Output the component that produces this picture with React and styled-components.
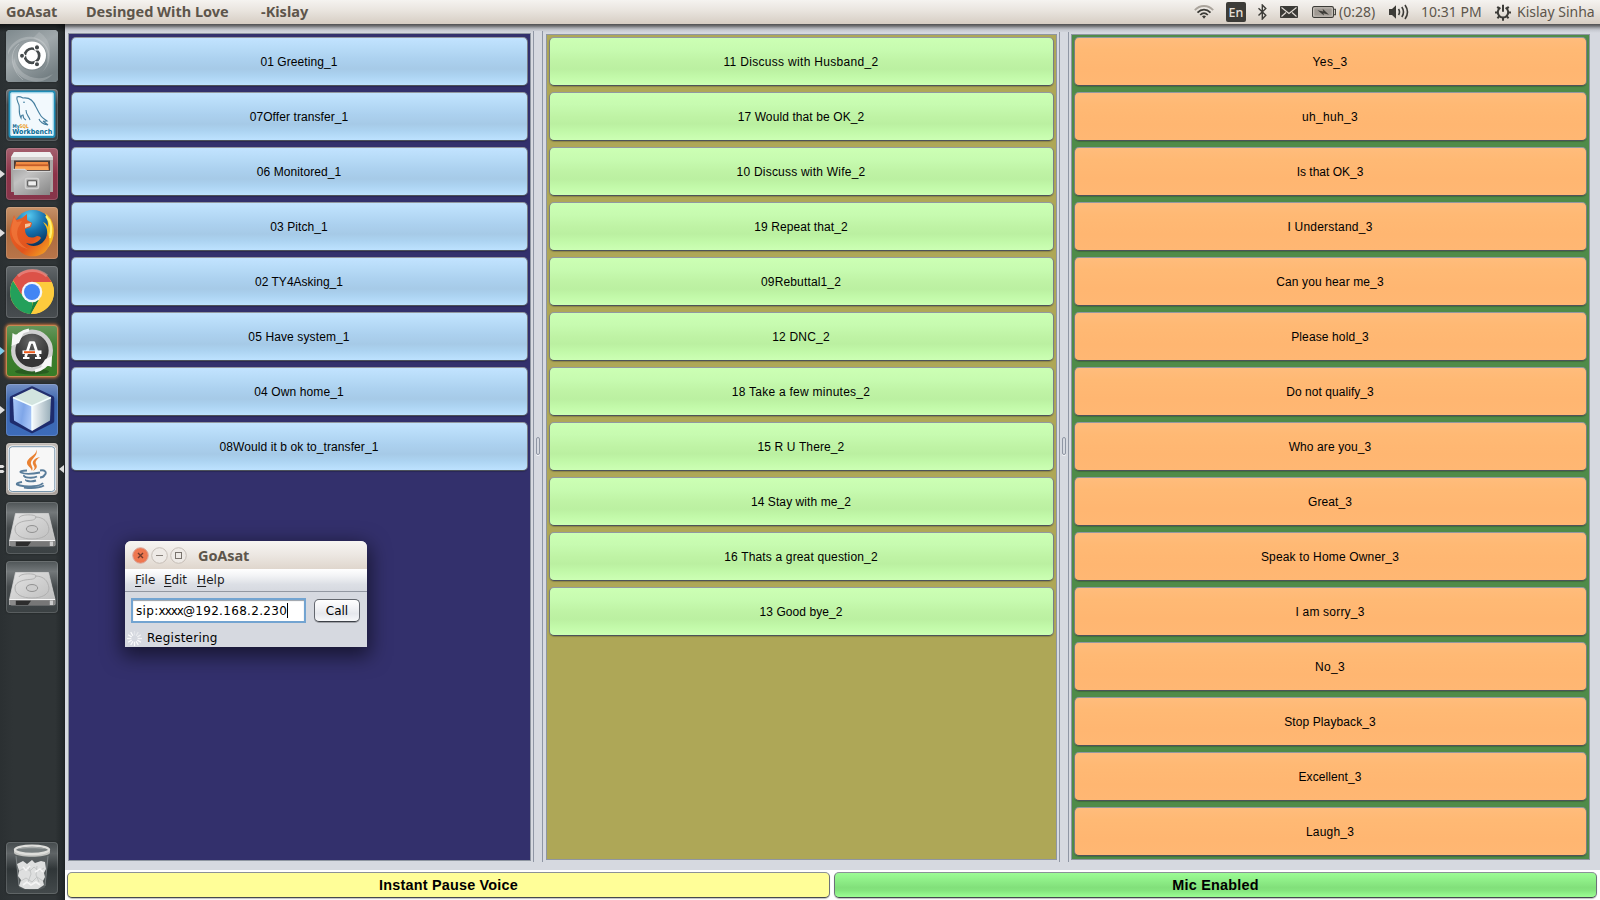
import React from "react";
import styled, { createGlobalStyle, css } from "styled-components";

const GlobalStyle = createGlobalStyle`
  * { box-sizing: border-box; }
  html, body { margin: 0; padding: 0; overflow: hidden; }
  body { background: #fff; font-family: "Liberation Sans", Arial, sans-serif; }
`;

const Desktop = styled.div`
  display: flex;
  flex-direction: column;
  width: 1600px;
  height: 900px;
  position: relative;
  overflow: hidden;
`;

/* ---------- top panel ---------- */

const TopPanel = styled.header`
  display: flex;
  justify-content: space-between;
  align-items: center;
  height: 24px;
  padding: 0 6px;
  background: linear-gradient(#f5f3f0, #e9e4de 45%, #d6cdc3);
  font-family: "Noto Sans", "Open Sans", sans-serif;
  color: #5d554b;
  white-space: nowrap;
`;

const AppTitle = styled.div`
  display: flex;
  height: 24px;
  font-size: 14.5px;
  line-height: 22px;
  font-weight: 700;
`;

const TitlePart = styled.span`
  width: ${(p) => p.$width}px;
  letter-spacing: ${(p) => p.$spacing}px;
`;

const Indicators = styled.div`
  display: flex;
  align-items: center;
  height: 24px;
`;

const Indicator = styled.div`
  display: flex;
  align-items: center;
  width: ${(p) => p.$width}px;
  height: 24px;
  font-size: 14px;
  line-height: 22px;
  padding-bottom: ${(p) => (p.$text ? 1 : 0)}px;
  svg { display: block; flex: none; }
`;

const LangBadge = styled.span`
  width: 20px;
  height: 20px;
  border-radius: 2px;
  background: #3c3b37;
  color: #e6e0d9;
  font-size: 12.5px;
  font-weight: 500;
  line-height: 21px;
  text-align: center;
`;

/* ---------- body ---------- */

const Body = styled.div`
  display: flex;
  height: 876px;
`;

const Launcher = styled.nav`
  display: flex;
  flex-direction: column;
  width: 65px;
  height: 876px;
  padding: 6px 0 6px;
  gap: 7px;
  background:
    linear-gradient(rgba(0, 0, 0, 0.6), transparent 8px),
    linear-gradient(90deg, #2b3032, #2f3436 20%, #2f3436 85%, #23282a 97%, #1d2022);
`;

const LauncherRow = styled.div`
  display: grid;
  grid-template-columns: 6px 52px 7px;
  align-items: center;
  height: 52px;
  margin-top: ${(p) => (p.$last ? "auto" : "0")};
  svg { display: block; }
`;

const Tile = styled.div`
  width: 52px;
  height: 52px;
  border-radius: 4px;
  overflow: hidden;
  background: ${(p) => p.$bg};
  box-shadow: ${(p) =>
    p.$glow
      ? "inset 0 0 0 1px #c98652, 0 0 3px 1px #c9733b"
      : "inset 0 0 0 1px rgba(255,255,255,.15), 0 0 2px rgba(0,0,0,.5)"};
`;

const Workspace = styled.main`
  display: flex;
  flex-direction: column;
  width: 1535px;
`;

const SplitArea = styled.div`
  display: flex;
  align-items: flex-start;
  height: 846px;
  padding-left: 3px;
  background: linear-gradient(#4f4f50, #707174 2px, #a5a7ac 4px, #c6c9d0 6px, #d6d9e0 9px);
`;

const tones = {
  blue: css`
    background: linear-gradient(#c2e3ff, #b8dcf8 20%, #acd1ef 45%, #a6cae7 66%, #acd3f1 80%, #bde2ff);
  `,
  lime: css`
    background: linear-gradient(#ccffb4, #c7fbb0 25%, #bff3a5 50%, #bbf0a1 66%, #c2f9a9 82%, #ccffb4);
  `,
  orange: css`
    background: linear-gradient(#ffbc7c, #ffb974 25%, #ffb671 66%, #ffb773);
  `,
};

const Column = styled.section`
  display: flex;
  flex-direction: column;
  gap: 6px;
  width: ${(p) => p.$width}px;
  height: ${(p) => p.$height}px;
  margin-top: ${(p) => p.$top}px;
  padding: ${(p) => p.$pad}px 2px 0;
  border: 1px solid #8f96a1;
  background: ${(p) => p.$bg};
`;

const ClipButton = styled.button`
  display: block;
  flex: none;
  width: 100%;
  height: 49px;
  margin: 0;
  padding: 1px 1px 0 0;
  border: 1px solid #777d86;
  border-top-color: #9298a0;
  border-bottom-color: #4d5259;
  border-radius: 5px;
  font: 12px/46px "Liberation Sans", Arial, sans-serif;
  letter-spacing: ${(p) => p.$spacing}px;
  color: #000;
  text-align: center;
  box-shadow: 0 1px 1px rgba(0, 0, 0, 0.2);
  ${(p) => tones[p.$tone]}
`;

const Divider = styled.div`
  display: flex;
  justify-content: center;
  width: 10px;
  height: ${(p) => p.$height}px;
  margin: ${(p) => p.$top}px ${(p) => p.$right}px 0 2px;
  padding-top: ${(p) => 413 - p.$top}px;
  border: solid #8f96a4;
  border-width: 0 1px;
  background: #d6d9e0;
`;

const Grip = styled.span`
  width: 4px;
  height: 18px;
  border: 1px solid #8f96a4;
  border-radius: 2px;
  box-shadow: 0 1px 0 #f4f5f8;
`;

const BottomBar = styled.footer`
  display: flex;
  gap: 4px;
  height: 30px;
  padding: 2px 3px 2px 2px;
  background: #fff;
`;

const ActionButton = styled.button`
  width: 763px;
  height: 26px;
  padding: 0;
  border: 1px solid #6d7279;
  border-top-color: #8c9198;
  border-bottom-color: #45494f;
  border-radius: 5px;
  background: ${(p) => p.$bg};
  font: bold 14.4px/24px "Liberation Sans", Arial, sans-serif;
  letter-spacing: 0.22px;
  color: #000;
  box-shadow: 0 1px 1px rgba(0, 0, 0, 0.25);
`;

/* ---------- floating dialog ---------- */

const Dialog = styled.div`
  position: absolute;
  left: 125px;
  top: 541px;
  width: 242px;
  height: 106px;
  border-radius: 6px 6px 0 0;
  background: #d6d9e0;
  box-shadow: 0 6px 20px 3px rgba(0, 0, 0, 0.55);
  font-family: "DejaVu Sans", sans-serif;
  font-size: 12px;
  color: #000;
  white-space: nowrap;
`;

const DialogTitle = styled.div`
  display: flex;
  align-items: center;
  gap: 2px;
  height: 28px;
  padding: 1px 0 0 7px;
  border-radius: 6px 6px 0 0;
  background: linear-gradient(#f7f5f2, #ece7e2 50%, #dfd6cd);
  svg { display: block; }
`;

const DialogName = styled.span`
  margin-left: 9px;
  padding-bottom: 2px;
  font: 700 14.5px/24px "Noto Sans", sans-serif;
  letter-spacing: -0.1px;
  color: #5d554b;
`;

const MenuBar = styled.div`
  display: flex;
  height: 23px;
  padding-left: 10px;
  border-bottom: 1px solid #9297a1;
  background: linear-gradient(#fff, #f3f4f6 30%, #dcdfe5 70%, #d6d9e0);
  line-height: 23px;
  color: #1c1c1e;
`;

const MenuItem = styled.span`
  width: ${(p) => p.$width}px;
  letter-spacing: ${(p) => p.$spacing}px;
`;

const Accel = styled.span`
  text-decoration: underline;
  text-decoration-thickness: 1px;
  text-underline-offset: 2px;
`;

const CallRow = styled.div`
  display: flex;
  align-items: center;
  gap: 8px;
  padding: 6px 0 0 6px;
`;

const AddressField = styled.div`
  display: flex;
  align-items: center;
  width: 175px;
  height: 25px;
  padding-left: 3px;
  border: 2px solid #73a4d1;
  box-shadow: inset 0 1px 1px #9aa0a8;
  background: #fff;
  letter-spacing: 0.32px;
`;

const Squeezed = styled.span`
  letter-spacing: -1px;
`;

const Caret = styled.i`
  width: 1px;
  height: 15px;
  background: #000;
`;

const CallButton = styled.button`
  width: 46px;
  height: 23px;
  padding: 1px 0 0;
  border: 1px solid #63676e;
  border-bottom-color: #3d4148;
  border-radius: 5px;
  background: linear-gradient(#fff, #f1f2f5 40%, #e6e8ed 65%, #f7f8fa);
  font: 12px/20px "DejaVu Sans", sans-serif;
  color: #000;
  box-shadow: 0 1px 0 rgba(0, 0, 0, 0.25);
`;

const StatusRow = styled.div`
  display: flex;
  align-items: center;
  gap: 5px;
  height: 18px;
  margin-top: 6px;
  padding-left: 2px;
  letter-spacing: 0.25px;
`;

/* ---------- drawings: panel indicators ---------- */

const ink = "#3c3b37";

const WifiIcon = () => (
  <svg width="20" height="14" viewBox="0 0 20 14" fill="none" strokeWidth="1.8">
    <path d="M.8 5.2C6-.4 14-.4 19.2 5.2" stroke="#aaa49c" />
    <path d="M3.5 7.6c3.8-4 9.2-4 13 0" stroke={ink} />
    <path d="M6.2 10c2.3-2.4 5.3-2.4 7.6 0" stroke={ink} />
    <path d="M8 11.3q2-1.5 4 0l-2 2.4z" fill={ink} />
  </svg>
);
const BluetoothIcon = () => (
  <svg width="9" height="16" viewBox="0 0 9 16" fill="none" stroke={ink} strokeWidth="1.4">
    <path d="M.5 4.3l7.3 7L4.3 15V1l3.5 3.6-7.3 7" />
  </svg>
);
const MailIcon = () => (
  <svg width="18" height="12" viewBox="0 0 18 12">
    <rect width="18" height="12" rx=".8" fill={ink} />
    <path d="M1.5 1.5L9 7.5l7.5-6M1.5 10.5l4.5-4M16.5 10.5l-4.5-4" fill="none" stroke="#e4ded7" strokeWidth="1.1" />
  </svg>
);
const BatteryIcon = () => (
  <svg width="24" height="12" viewBox="0 0 24 12">
    <rect x=".6" y=".6" width="20.8" height="10.8" rx="1.5" fill="#dcd6ce" stroke={ink} strokeWidth="1.1" />
    <path d="M22 3.2h1.4v5.6H22" fill="none" stroke={ink} strokeWidth="1.1" />
    <rect x="2.2" y="2.2" width="17.6" height="7.6" fill="#a09a93" />
    <path d="M5.5 4.2L11.3 5.6 10.6 2.8 17 8.8 11.4 7.2 12 9.6z" fill={ink} />
  </svg>
);
const SoundIcon = () => (
  <svg width="20" height="16" viewBox="0 0 20 16">
    <path d="M0 5h3l4-3.7v13.4L3 11H0z" fill={ink} />
    <path d="M9.5 5q2 3 0 6M12.8 3q3.4 5 0 10M16 1q5 7 0 14" fill="none" stroke={ink} strokeWidth="1.6" />
  </svg>
);
const SessionIcon = () => (
  <svg width="16" height="17" viewBox="0 0 16 17" fill="none" stroke={ink} strokeWidth="2">
    <path d="M5.4 3.7a5.2 5.2 0 1 0 5.2 0" />
    <path d="M8 .8v7" />
    <path d="M0 8.4h2.5M13.5 8.4H16M8 14v2.7M2.3 2.8l1.9 1.9M13.7 2.8l-1.9 1.9M2.4 14.2l1.9-1.9M13.6 14.2l-1.9-1.9" />
  </svg>
);

/* ---------- drawings: launcher ---------- */

const Pic = ({ children }) => (
  <svg width="52" height="52" viewBox="0 0 52 52">{children}</svg>
);

const UbuntuPic = () => (
  <Pic>
    <defs>
      <linearGradient id="dash" x1="0" y1="0" x2=".6" y2="1">
        <stop offset="0" stopColor="#7e898d" /><stop offset=".5" stopColor="#a0a8ab" /><stop offset="1" stopColor="#758084" />
      </linearGradient>
    </defs>
    <rect width="52" height="52" fill="url(#dash)" />
    <path d="M2 21C9 5 29 2 39 14c8 10 5 22-3 28C48 30 42 8 24 9 12 10 5 17 2 25z" fill="#fff" opacity=".2" />
    <path d="M8 27c3 18 23 27 39 17C34 59 10 50 7 34z" fill="#fff" opacity=".2" />
    <path d="M33 2c9 5 15 18 8 31 1-13-4-21-14-25z" fill="#fff" opacity=".14" />
    <path d="M13 14C3 22 4 39 17 50" fill="none" stroke="#fff" opacity=".25" />
    <circle cx="26" cy="26" r="14.8" fill="#6d777b" opacity=".35" />
    <circle cx="26" cy="25.6" r="14" fill="#fff" />
    <circle cx="26" cy="25.7" r="7.2" fill="none" stroke="#454a4c" strokeWidth="2.7" />
    <g stroke="#fff" strokeWidth="1.1">
      <path d="M18 25.7h3M29 20.5l1.5-2.6M29 31l1.5 2.6" />
      <circle cx="16" cy="25.7" r="2.5" fill="#454a4c" />
      <circle cx="31" cy="17.4" r="2.6" fill="#454a4c" />
      <circle cx="31" cy="34.3" r="2.6" fill="#454a4c" />
    </g>
  </Pic>
);

const PicText = styled.text`
  font-family: "DejaVu Sans", sans-serif;
  font-weight: 700;
`;

const WorkbenchPic = () => (
  <Pic>
    <rect x="3.5" y="2.5" width="45" height="45.5" rx="2" fill="#f2f9fd" stroke="#1f8cb5" strokeWidth="2" />
    <rect x="5" y="4" width="42" height="42.5" rx="1" fill="none" stroke="#b5e2f3" strokeWidth="1" />
    <path d="M20 31c-2-1-3-3-3-5-2 0-2 3-2 3-3-5-1-10-2-13-1-3-3-5-2-8 2-1 4 0 6 1 7-1 11 4 13 9 2 4 3 6 5 9 2 3 4 3 6 5-2 0-3 1-4 0l5 4c-5-1-8-3-9-6M20 21c0 5 3 6 4 10" fill="none" stroke="#457f9f" strokeWidth="1.1" />
    <circle cx="18" cy="13.3" r=".8" fill="#33769b" />
    <PicText x="6.5" y="38.5" fontSize="5" fill="#0b648f" textLength="7" lengthAdjust="spacingAndGlyphs">My</PicText>
    <PicText x="13.5" y="38.5" fontSize="5" fill="#ed9b18" textLength="9" lengthAdjust="spacingAndGlyphs">SQL</PicText>
    <PicText x="6.3" y="45" fontSize="7" fill="#056a94" textLength="40" lengthAdjust="spacingAndGlyphs">Workbench</PicText>
  </Pic>
);

const FilesPic = () => (
  <Pic>
    <defs>
      <linearGradient id="cab" x1="0" y1="0" x2="1" y2="1">
        <stop offset="0" stopColor="#a4a4a4" /><stop offset=".3" stopColor="#c2c2c2" /><stop offset="1" stopColor="#858585" />
      </linearGradient>
    </defs>
    <path d="M8 4h36l3 5v35H5V9z" fill="#a9a6a4" />
    <path d="M8 4h36l3 5H5z" fill="#efefef" />
    <path d="M5 9h42v3H5z" fill="#cfcdcc" />
    <rect x="8" y="12.5" width="36" height="12" fill="#4b3c36" />
    <path d="M10 14h32l1 8H9z" fill="#ef8c44" />
    <path d="M9.500 16.500h33v1.200h-33z" fill="#b94e1f" />
    <path d="M9 18.500h33V22H9z" fill="#fba65a" />
    <path d="M7 21h12l2 2h24l-1 24H8z" fill="url(#cab)" />
    <path d="M7 21.3h12l2 2h24" fill="none" stroke="#e9e9e9" strokeWidth=".8" />
    <rect x="19.5" y="30.500" width="13" height="10" rx="1.5" fill="#aaa" stroke="#d2d2d2" strokeWidth="1.6" />
    <rect x="21.7" y="32.700" width="8.8" height="5.300" rx=".8" fill="#eee" stroke="#555" strokeWidth="1.1" />
  </Pic>
);

const FirefoxPic = () => (
  <Pic>
    <defs>
      <radialGradient id="globe" cx=".4" cy=".15" r=".8"><stop offset="0" stopColor="#55c8ef" /><stop offset=".5" stopColor="#1670ad" /><stop offset="1" stopColor="#073158" /></radialGradient>
      <linearGradient id="fox" x1="0" y1="0" x2="1" y2="1"><stop offset="0" stopColor="#e8622c" /><stop offset=".6" stopColor="#e2541c" /><stop offset="1" stopColor="#f6ae23" /></linearGradient>
    </defs>
    <circle cx="27" cy="22.5" r="19.5" fill="url(#globe)" />
    <path d="M39 6c7 5 10 13 8.5 23-2 11-10 18-20 18.5C34 43 40 38 41 29c1-7-1-10-4-14 3 1 4 3 5 5 0-6-1-10-3-14z" fill="#f7bd20" />
    <path d="M40 9c5 6 6 13 4 20M43 12q4 9 1 19" fill="none" stroke="#fff071" strokeWidth="2" />
    <path d="M8 8l2 5 6-2 5-4v6l5 3-1 4-6 2c0 6 3 10 10 8 2-2 5-1 6 1-3 5-10 7-15 5 4 4 11 4 16 0 3-3 5-6 5-10 4 7 3 14-2 19-6 5-16 6-23 1C5 38 2 29 5 18z" fill="url(#fox)" />
    <path d="M8 10l3 5 5-1-4 7c-3 9 2 17 10 21C10 40 3 28 6 18z" fill="#f58444" opacity=".55" />
    <path d="M19 17l6-1-1 3-5 2z" fill="#f6c39b" />
  </Pic>
);

const ChromePic = () => (
  <Pic>
    <circle cx="26" cy="26" r="22" fill="#fdcb3d" />
    <path d="M7 15l10.4 16 8.6 5 .5 0-1.5 12A22 22 0 0 1 7 15z" fill="#23a05b" />
    <path d="M27 36.2l7.6-5.2L25 48l-1 0z" fill="#178043" />
    <path d="M25 48l9.6-17L35.8 26 34 16l11.6 0a22 22 0 0 1-20.600 32z" fill="#fdcb3d" />
    <path d="M7 14A22 22 0 0 1 45.6 16H26L15 28z" fill="#dc5248" />
    <path d="M12 10A22 22 0 0 1 41 10" fill="none" stroke="#f09b96" strokeWidth="3" opacity=".55" />
    <circle cx="26" cy="26" r="10.3" fill="#f4f6f8" /><circle cx="26" cy="26" r="8" fill="#4285f4" />
  </Pic>
);

const UpdaterPic = () => (
  <Pic>
    <defs><radialGradient id="core" cx=".5" cy=".25"><stop offset="0" stopColor="#666" /><stop offset="1" stopColor="#353535" /></radialGradient></defs>
    <ellipse cx="26" cy="46.5" rx="17" ry="3" fill="#285d20" />
    <circle cx="26" cy="25.5" r="18.8" fill="url(#core)" stroke="#cfcfcf" strokeWidth="4.3" />
    <path d="M8 17c3-7 8-11 15-12M44 34c-3 7-8 11-15 12" fill="none" stroke="#f7f7f7" strokeWidth="3" />
    <path d="M6.5 8l2.5 1.5 8-.5-4 9-7.5 3zM46 31l-.5 11-2.5-1-8 .5 4-7z" fill="#f7f7f7" />
    <g fill="none" stroke="#fff"><path d="M19.5 32l4.7-14.5h3.6L32.5 32" strokeWidth="2.7" strokeLinejoin="round" /><path d="M17 33h6.5M29 33h6" strokeWidth="2" /></g>
    <rect x="16.5" y="25.4" width="19" height="3.6" fill="#fff" /><rect x="18" y="26.2" width="11" height="2" fill="#ed5a1c" />
  </Pic>
);

const CubePic = () => (
  <Pic>
    <defs>
      <linearGradient id="cl" x1="0" y1="0" x2="1" y2=".3"><stop offset="0" stopColor="#a8c8fa" /><stop offset=".6" stopColor="#7fa6e8" /><stop offset="1" stopColor="#a5c3f6" /></linearGradient>
      <linearGradient id="cr" x1="0" y1="0" x2="1" y2="0"><stop offset="0" stopColor="#f7fafb" /><stop offset="1" stopColor="#98aeb9" /></linearGradient>
    </defs>
    <path d="M26 4.5L46 14v23L26 47 6 37V14z" fill="#1b2464" stroke="#1b2464" strokeWidth="4.5" strokeLinejoin="round" opacity=".88" />
    <path d="M26 4.5L45 13.5 26 22 7 13.5z" fill="#d2e4df" />
    <path d="M7 13.5L26 22v25L8 36.5z" fill="url(#cl)" />
    <path d="M45 13.5L26 22v25l18-10.5z" fill="url(#cr)" />
    <path d="M7 13.5L26 22l19-8.5M26 22v24" fill="none" stroke="#f5ffff" strokeWidth="1.5" />
  </Pic>
);

const JavaPic = () => (
  <Pic>
    <rect x="2.5" y="3" width="47" height="46" rx="4" fill="#f7f7f7" stroke="#fff" strokeWidth="1.2" />
    <rect x="3.2" y="3.7" width="45.6" height="44.8" rx="3" fill="none" stroke="#557b98" strokeWidth=".8" />
    <path d="M30 6c2 6-9 8-9 14 0 3 4 4 5 8 2-4-2-6-1-9 1-4 8-7 5-13zM34 14c-5 1-8 4-7 7s3 3 0 7c5-3 4-5 3-7s0-4 4-7z" fill="#e98132" />
    <g fill="none" stroke="#597d9b" strokeWidth="1.9">
      <path d="M21 27.5c-5 0-8 1-6 2 4 2 14 1 19 0M34 27.5c5-1 7 2 5 4-1 2-3 3-5 3M18 32c-1 3 9 3.5 13 1.5M20 36.5c-1 2 6 2.5 10 1" />
      <path d="M16 39c-6 1-7 2.5-2 3.5 8 2 20 1 23-2.5M18 44.5c8 1 16 0 20-2" />
    </g>
  </Pic>
);

const DrivePic = () => (
  <Pic>
    <defs><linearGradient id="hd" x1="0" y1="0" x2="1" y2="1"><stop offset="0" stopColor="#e4e4e4" /><stop offset="1" stopColor="#bababa" /></linearGradient></defs>
    <path d="M9.5 11.5h33l6.5 27v5H3.500v-5z" fill="url(#hd)" stroke="#d8d8d8" strokeWidth=".7" />
    <path d="M3.5 38.8H49V43q0 1.5-2 1.5H5.5Q3.5 44 3.5 42z" fill="#8a8a8a" />
    <path d="M9 39.8h34V44H9z" fill="#777" /><path d="M10 39.8h15l-3 4.2H10z" fill="#2d2d2d" /><path d="M44 39.5h3V44h-3z" fill="#ccc" />
    <path d="M3.5 38.5H49" stroke="#f6f6f6" strokeWidth="1.2" />
    <path d="M29 15c9 0 13 5 14 12 0 7-8 10-17 10S9 34 9 27c0-5 5-7 10-8 6-1 10 0 11-4 0-3-16-3-17 1" fill="none" stroke="#acacac" strokeWidth=".9" />
    <ellipse cx="26" cy="27" rx="5.7" ry="3.5" fill="#ccc" stroke="#929292" />
  </Pic>
);

const TrashPic = () => (
  <Pic>
    <path d="M9 11l4 34c2 4 24 4 26 0l4-34z" fill="#5c6264" opacity=".7" />
    <path d="M10 14l3 30M42 14l-3 30" stroke="#8d9294" strokeWidth=".7" />
    <path d="M11 22l6-3 4 3 5-4 3 3 6-2 4 1 1 7-2 4 1 4-2 4 1 4-6 4H19l-6-3 2-6-3-4 1-5z" fill="#dedfdf" />
    <path d="M13 29l6-3 5 3 4-4 5 4 5-3M15 39l5-3 6 4 5-5 6 4M23 24l2 8-3 8M31 24l-1 9 3 7" fill="none" stroke="#c3c5c5" strokeWidth="1" />
    <path d="M17 25l3 3 4-4M29 30l5-3 3 3M17 43l4-3 4 3 5-3 4 3" fill="none" stroke="#f4f4f4" strokeWidth="1.6" />
    <path d="M8 8v3c3 5 33 5 36 0V8z" fill="#c2c3c0" />
    <ellipse cx="26" cy="7.8" rx="17" ry="4.2" fill="#777e7f" stroke="#dededb" strokeWidth="2.4" />
    <path d="M12 7c6-3 22-3 28 0-7-1-21-1-28 0z" fill="#a5a9a8" />
  </Pic>
);

const TileArrow = ({ color }) => (
  <svg width="5" height="8" viewBox="0 0 5 8"><path d="M0 0l5 4-5 4z" fill={color} /></svg>
);
const DoubleMark = () => (
  <svg width="5" height="8" viewBox="0 0 5 8"><path d="M0 0h3l1.500 1.500L3 3H0zM0 5h3l1.500 1.500L3 8H0z" fill="#dfdfdf" /></svg>
);
const FocusArrow = () => (
  <svg width="7" height="8" viewBox="0 0 7 8"><path d="M6 0v8L1 4z" fill="#dcdcdc" /></svg>
);

const dark = "linear-gradient(#454b4d, #5f6466 22%, #303638 52%, #444a4c)";
const driveBg = "linear-gradient(#4e5456, #73787a 20%, #464b4d 50%, #3b4143)";

const launcherItems = [
  { Art: UbuntuPic, bg: "#8c979b" },
  { Art: WorkbenchPic, bg: "linear-gradient(#73797c, #3d4346 30%, #3d4346)" },
  { Art: FilesPic, bg: "linear-gradient(#a4606e, #8d3348 50%, #86354a)", mark: "light" },
  { Art: FirefoxPic, bg: "linear-gradient(#c79269, #aa6a3e 45%, #b97549)", mark: "light" },
  { Art: ChromePic, bg: "linear-gradient(#62676a, #3c4245 55%, #484d50)" },
  { Art: UpdaterPic, bg: "linear-gradient(#67975d, #3c7d30 45%, #377c26)", mark: "blue", glow: true },
  { Art: CubePic, bg: "linear-gradient(#7590c4, #3b66af 35%, #3e6cba)", mark: "light" },
  { Art: JavaPic, bg: "linear-gradient(#c1bbb6, #a8a09a)", mark: "double", focus: true },
  { Art: DrivePic, bg: driveBg },
  { Art: DrivePic, bg: driveBg },
  { Art: TrashPic, bg: dark, last: true },
];

/* ---------- dialog drawings ---------- */

const RoundControl = ({ kind }) => (
  <svg width="17" height="17" viewBox="0 0 17 17">
    <circle cx="8.5" cy="8.5" r="7.8" fill={kind === "close" ? "#ee7750" : "#eeeae6"} stroke={kind === "close" ? "#d9aaa0" : "#c6beb7"} />
    {kind === "close" && <path d="M6 6l5 5M11 6l-5 5" stroke="#713a2c" strokeWidth="1.4" />}
    {kind === "min" && <path d="M5 8.5h7" stroke="#86807a" />}
    {kind === "max" && <rect x="5.5" y="5.5" width="6" height="6" fill="none" stroke="#79736d" />}
  </svg>
);

const Spinner = () => (
  <svg width="15" height="15" viewBox="0 0 15 15" stroke="#fff" strokeWidth="1.3">
    {Array.from({ length: 12 }, (_, i) => (
      <path key={i} d="M7.5 0v4.3" opacity={i < 4 ? 0.3 + i * 0.15 : 0.9} transform={`rotate(${i * 30} 7.5 7.5)`} />
    ))}
  </svg>
);

/* ---------- content ---------- */

const opening = [
  ["01 Greeting_1"],
  ["07Offer transfer_1"],
  ["06 Monitored_1"],
  ["03 Pitch_1"],
  ["02 TY4Asking_1", 0],
  ["05 Have system_1", 0.12],
  ["04 Own home_1", 0.12],
  ["08Would it b ok to_transfer_1", 0.08],
];
const rebuttals = [
  ["11 Discuss with Husband_2", 0.31],
  ["17 Would that be OK_2", 0.1],
  ["10 Discuss with Wife_2", 0.22],
  ["19 Repeat that_2", 0.1],
  ["09Rebuttal1_2", 0.15],
  ["12 DNC_2", 0.18],
  ["18 Take a few minutes_2", 0.26],
  ["15 R U There_2", 0.12],
  ["14 Stay with me_2"],
  ["16 Thats a great question_2", 0.16],
  ["13 Good bye_2", 0.06],
];
const replies = [
  ["Yes_3", 0.4],
  ["uh_huh_3", 0.3],
  ["Is that OK_3", 0],
  ["I Understand_3", 0.22],
  ["Can you hear me_3", 0.12],
  ["Please hold_3", 0.12],
  ["Do not qualify_3", 0.06],
  ["Who are you_3", 0.1],
  ["Great_3", 0.1],
  ["Speak to Home Owner_3", 0.16],
  ["I am sorry_3", 0.2],
  ["No_3", 0.3],
  ["Stop Playback_3", 0.1],
  ["Excellent_3", 0.1],
  ["Laugh_3", 0.2],
];

const ClipList = ({ clips, tone }) =>
  clips.map(([name, spacing = 0.08]) => (
    <ClipButton key={name} $tone={tone} $spacing={spacing}>{name}</ClipButton>
  ));

export default function App() {
  return (
    <Desktop>
      <GlobalStyle />
      <TopPanel>
        <AppTitle>
          <TitlePart $width={80} $spacing={-0.1}>GoAsat</TitlePart>
          <TitlePart $width={175} $spacing={0}>Desinged With Love</TitlePart>
          <TitlePart $width={60} $spacing={0}>-Kislay</TitlePart>
        </AppTitle>
        <Indicators>
          <Indicator $width={32}><WifiIcon /></Indicator>
          <Indicator $width={32}><LangBadge>En</LangBadge></Indicator>
          <Indicator $width={22}><BluetoothIcon /></Indicator>
          <Indicator $width={32}><MailIcon /></Indicator>
          <Indicator $width={27}><BatteryIcon /></Indicator>
          <Indicator $width={50} $text>(0:28)</Indicator>
          <Indicator $width={32}><SoundIcon /></Indicator>
          <Indicator $width={74} $text>10:31 PM</Indicator>
          <Indicator $width={22}><SessionIcon /></Indicator>
          <Indicator $width={77} $text>Kislay Sinha</Indicator>
        </Indicators>
      </TopPanel>
      <Body>
        <Launcher>
          {launcherItems.map(({ Art, bg, mark, glow, focus, last }, i) => (
            <LauncherRow key={i} $last={last}>
              <span>
                {mark === "double" && <DoubleMark />}
                {(mark === "light" || mark === "blue") && <TileArrow color={mark === "blue" ? "#7fcdee" : "#dfdfdf"} />}
              </span>
              <Tile $bg={bg} $glow={glow}><Art /></Tile>
              <span>{focus && <FocusArrow />}</span>
            </LauncherRow>
          ))}
        </Launcher>
        <Workspace>
          <SplitArea>
            <Column $width={463} $height={828} $top={9} $pad={3} $bg="#33306c">
              <ClipList clips={opening} tone="blue" />
            </Column>
            <Divider $top={7} $height={831} $right={3}><Grip /></Divider>
            <Column $width={511} $height={826} $top={10} $pad={2} $bg="#aea757">
              <ClipList clips={rebuttals} tone="lime" />
            </Column>
            <Divider $top={8} $height={830} $right={2}><Grip /></Divider>
            <Column $width={519} $height={826} $top={10} $pad={2} $bg="#4f8b49">
              <ClipList clips={replies} tone="orange" />
            </Column>
          </SplitArea>
          <BottomBar>
            <ActionButton $bg="#fffe98">Instant Pause Voice</ActionButton>
            <ActionButton $bg="linear-gradient(#9cfc94, #91f18a 25%, #82e07b 60%, #84e47d 72%, #9bff93)">Mic Enabled</ActionButton>
          </BottomBar>
        </Workspace>
      </Body>
      <Dialog>
        <DialogTitle>
          <RoundControl kind="close" />
          <RoundControl kind="min" />
          <RoundControl kind="max" />
          <DialogName>GoAsat</DialogName>
        </DialogTitle>
        <MenuBar>
          <MenuItem $width={29} $spacing={0.1}><Accel>F</Accel>ile</MenuItem>
          <MenuItem $width={33} $spacing={-0.1}><Accel>E</Accel>dit</MenuItem>
          <MenuItem $width={40} $spacing={0.1}><Accel>H</Accel>elp</MenuItem>
        </MenuBar>
        <CallRow>
          <AddressField>sip:<Squeezed>xxxx</Squeezed>@192.168.2.230<Caret /></AddressField>
          <CallButton>Call</CallButton>
        </CallRow>
        <StatusRow><Spinner />Registering</StatusRow>
      </Dialog>
    </Desktop>
  );
}
